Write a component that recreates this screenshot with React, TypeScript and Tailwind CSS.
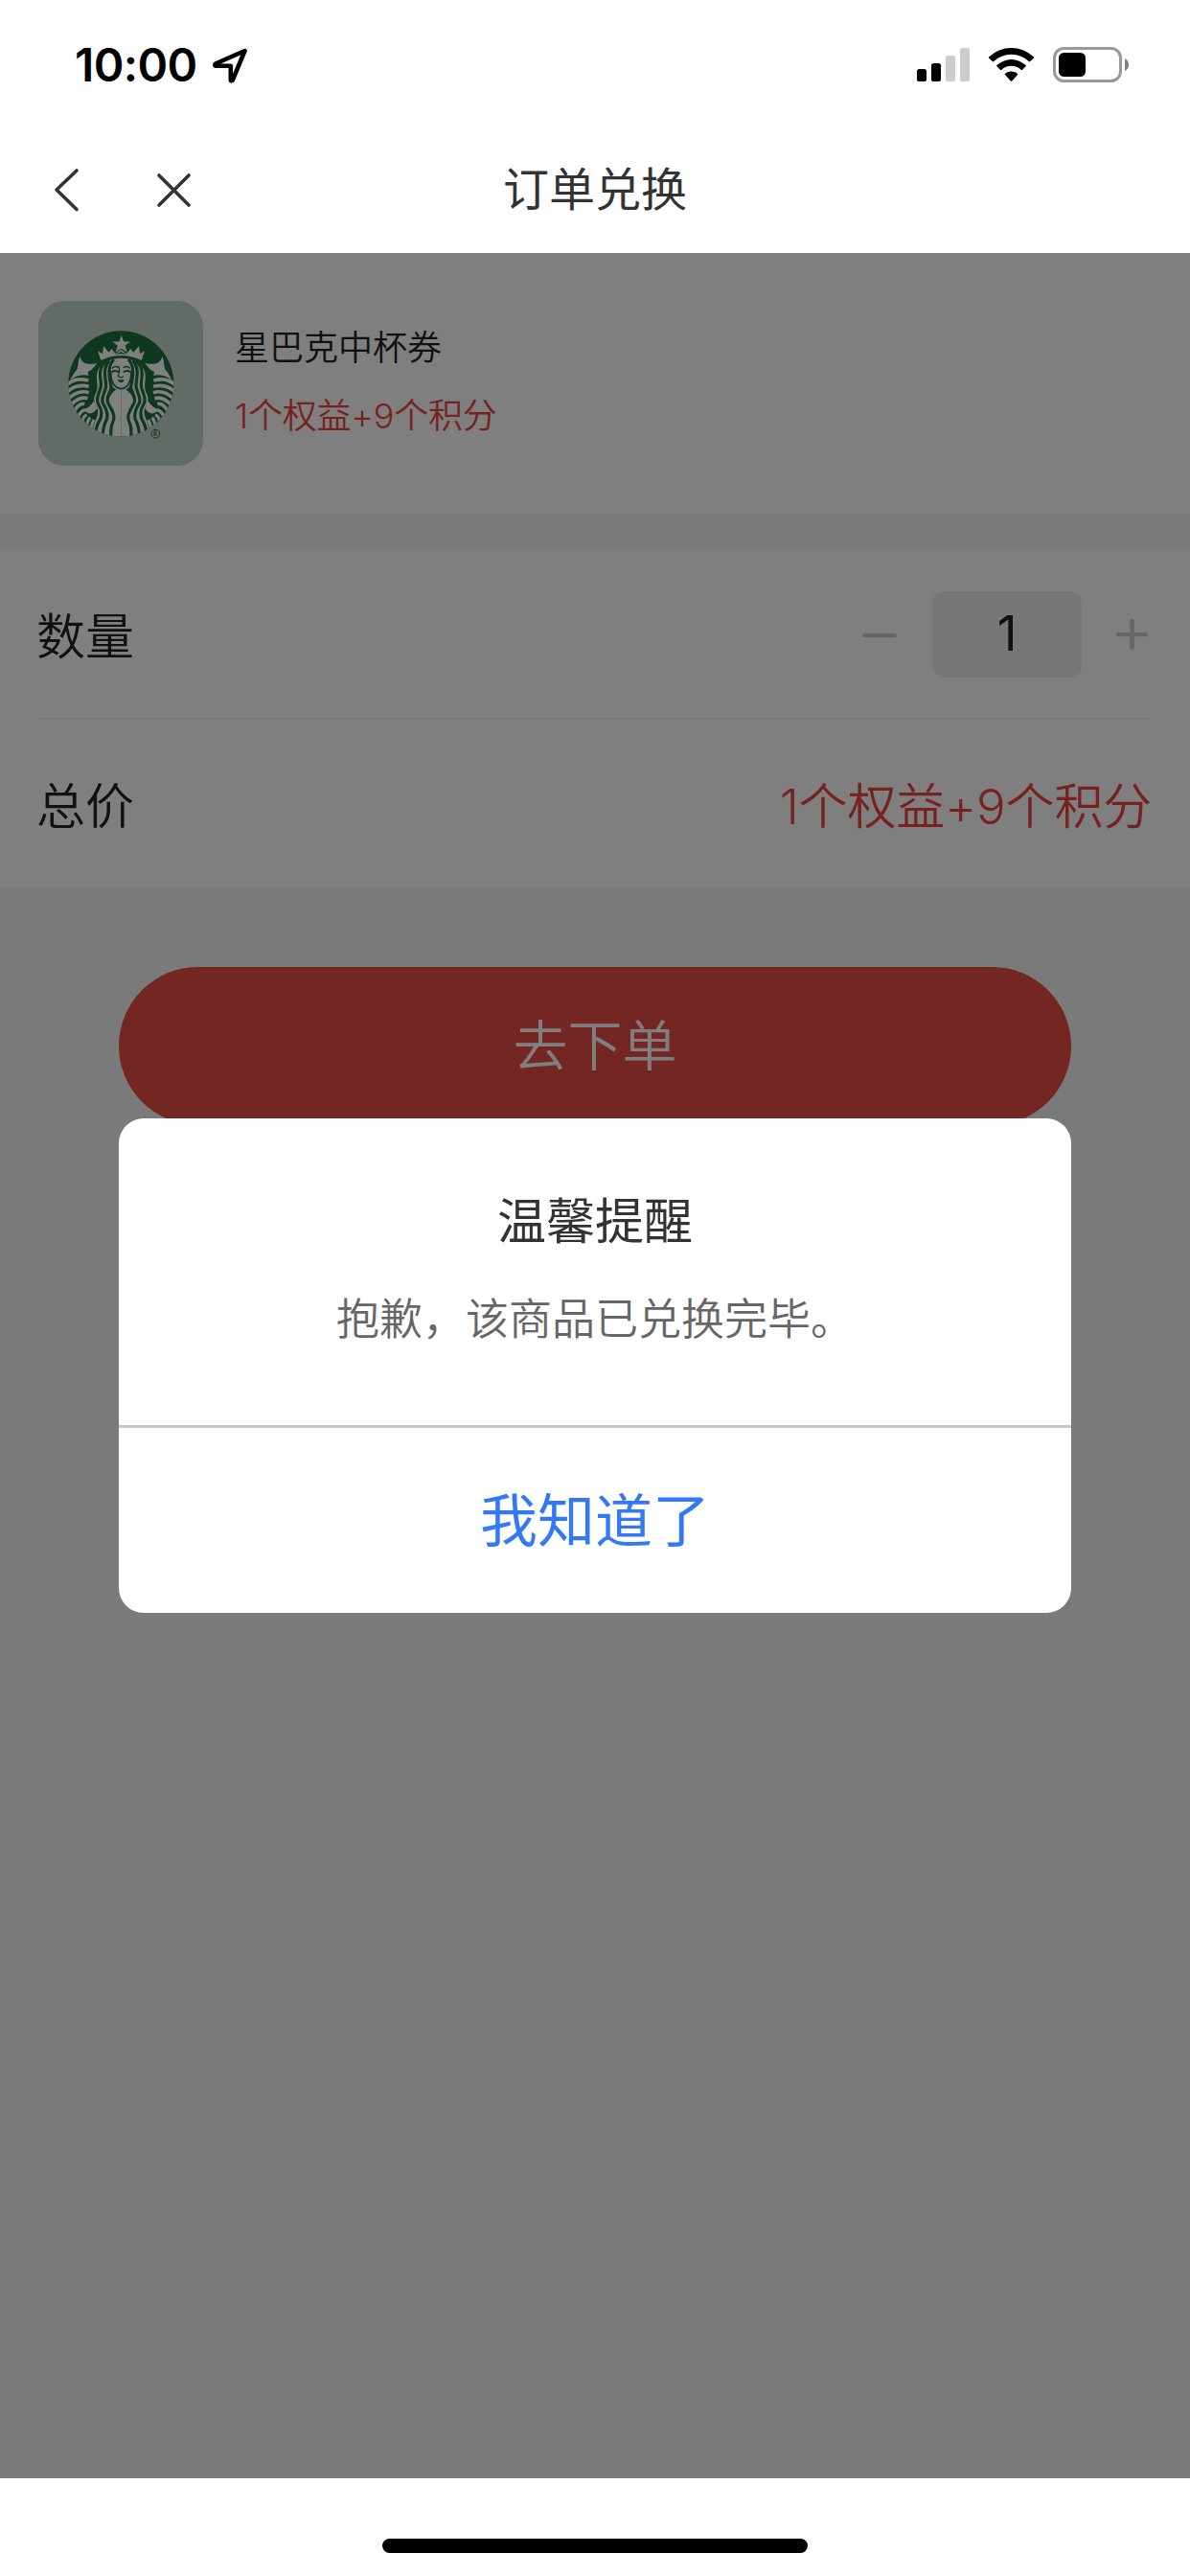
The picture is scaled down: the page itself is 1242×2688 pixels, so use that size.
import { useState } from 'react'
import type { ReactNode } from 'react'

const PRICE = '1个权益+9个积分'

function StatusBar() {
  return (
    <div className="flex h-[132px] items-start justify-between pr-[63px] pl-[78px] text-black">
      <div className="flex pt-[39px]">
        <span className="w-[144px] text-[48px] leading-[58px] font-semibold tracking-[-0.6px]">10:00</span>
        <svg className="mt-[10px] h-[39px] w-[38px]" viewBox="0 0 38 39" fill="none" stroke="currentColor" strokeWidth="4.6" strokeLinejoin="round">
          <path d="M33.5 4 L2.9 17.5 C2 18 2.2 19.8 3.2 19.8 H18.8 V34.2 C18.8 35.4 20.2 35.6 20.8 34.6 L33.5 4 Z" />
        </svg>
      </div>
      <div className="flex items-center pt-[48px]">
        <svg className="h-[38px] w-[56px]" viewBox="0 0 56 38">
          <rect x="0" y="24" width="10" height="13" rx="2.6" />
          <rect x="15" y="18" width="10" height="19" rx="2.6" />
          <rect x="30" y="10" width="10" height="27" rx="2.6" fill="#ccc" />
          <rect x="45" y="2" width="10" height="35" rx="2.6" fill="#ccc" />
        </svg>
        <svg className="ml-[18px] h-[38px] w-[50px]" viewBox="0 0 50 38">
          <path d="M1 11.5 A34 34 0 0 1 48 11.5 Q48.3 12.2 47.8 12.7 L44 16.2 Q43.5 16.6 43 16.2 A27 27 0 0 0 6 16.2 Q5.5 16.6 5 16.2 L1.2 12.7 Q.7 12.2 1 11.5 Z" />
          <path d="M9.4 20.1 A22 22 0 0 1 39.6 20.1 Q40.1 20.7 39.6 21.3 L36 24.9 Q35.4 25.3 34.9 24.9 A15.2 15.2 0 0 0 14.1 24.9 Q13.5 25.3 13 24.9 L9.4 21.3 Q8.9 20.7 9.4 20.1 Z" />
          <path d="M18 28.8 A10 10 0 0 1 31 28.8 Q31.5 29.4 31 30 L25.2 36.4 Q24.5 37 23.8 36.4 L18 30 Q17.5 29.4 18 28.8 Z" />
        </svg>
        <svg className="ml-[18px] h-[38px] w-[80px]" viewBox="0 0 80 38">
          <rect x="1.5" y="2.5" width="69" height="34" rx="10" fill="none" stroke="#999" strokeWidth="3" />
          <rect x="6" y="7" width="28" height="25" rx="5.5" />
          <path d="M75 13 Q79 15 79 19.5 Q79 24 75 26 Z" fill="#808080" />
        </svg>
      </div>
    </div>
  )
}

function NavBar() {
  return (
    <div className="relative flex h-[132px] items-center justify-center text-[#333]">
      <svg className="absolute top-[42px] left-[55px] h-[48px] w-[148px]" viewBox="0 0 148 48" fill="none" stroke="currentColor" strokeWidth="3.6" strokeLinecap="round">
        <path d="M25 4 L4 24 L25 44.5" strokeLinejoin="round" />
        <path d="M111 9 L142 40 M142 9 L111 40" />
      </svg>
      <h1 className="text-[48px] leading-[66px]">订单兑换</h1>
    </div>
  )
}

// one half of the siren: fin, scales, hair. The other half is its mirror
function SirenHalf() {
  return (
    <>
      <g fill="#fff">
        <path d="M160 216 Q166 234 178 238 Q198 242 214 236 Q201 257 186 263 Q184 270 188 275 Q152 268 130 292 Q139 268 151 257 Q155 243 156 228 Z" />
        <path d="M173 381 Q193 376 204 355 L214 378 Q204 396 188 394 Q176 390 173 381 Z" />
      </g>
      <g fill="none" stroke="#fff" strokeWidth="11">
        <path d="M117 307 Q145 279 187 291" />
        <path d="M119 328 Q149 300 188 310" />
        <path d="M121 352 Q153 318 188 329" />
        <path d="M130 370 Q157 339 184 347" />
        <path d="M141 389 Q157 361 175 364" />
        <path d="M155 403 Q164 386 176 383" strokeWidth="10" />
        <path d="M168 419 Q171 402 182 399" strokeWidth="10" />
        <path d="M181 432 Q184 416 192 407" strokeWidth="10" />
        <path d="M194 445 Q197 428 204 414" strokeWidth="10" />
      </g>
      <path d="M289 221 C254 221 226 238 216 260 C207 289 221 302 211 328 C201 345 203 359 213 375 C224 397 205 417 202 440 L215 480 H289 Z" fill="#fff" />
      <g fill="none" stroke="#1e7040" strokeWidth="9.5">
        <path d="M242 232 C214 252 226 285 226 303 C228 325 207 339 217 363 C230 383 232 403 218 423 Q210 438 210 460" />
        <path d="M252 228 C229 255 242 286 242 307 C242 329 224 340 232 362 C246 385 252 404 240 422 Q232 440 231 475" />
        <path d="M266 225 C244 250 253 286 258 309 C260 327 240 340 248 361 C258 381 274 400 263 422 Q254 440 259 479" />
      </g>
      <path d="M258 306 Q270 320 275 318 Q255 334 249 351 L244 340 Z" fill="#1e7040" />
    </>
  )
}

function CouponLogo() {
  return (
    <svg className="h-[172px] w-[172px] rounded-[27px] bg-[#c4d6cc]" viewBox="30 42 516 516">
      <defs>
        <clipPath id="seal">
          <circle cx="289" cy="301" r="165" />
        </clipPath>
      </defs>
      <g clipPath="url(#seal)">
        <rect x="120" y="130" width="340" height="340" fill="#1e7040" />
        <SirenHalf />
        <g transform="matrix(-1 0 0 1 578 0)">
          <SirenHalf />
        </g>
        <path d="M289 227 C266 227 257 242 257 265 C257 297 268 315 289 317 C310 315 321 297 321 265 C321 242 312 227 289 227 Z" fill="#fff" />
        <g fill="none" stroke="#1e7040" strokeLinecap="round">
          <path d="M257 262 C257 297 268 315 289 317 C310 315 321 297 321 262" strokeWidth="5" />
          <path d="M262 252 Q270 244 283 250 Q286 264 280 277 M316 252 Q308 244 297 250" strokeWidth="4" />
          <path d="M263 263 Q272 258 280 264 M298 264 Q307 258 316 263" strokeWidth="6" />
          <path d="M282 279 Q289 284 296 279" strokeWidth="3.5" />
          <path d="M280 291 Q289 288 298 291 Q289 302 280 291 Z" fill="#1e7040" strokeWidth="2.5" />
        </g>
        <path d="M216 199 L231 207 L234 183 L251 203 L259 192 L272 207 L289 194 L306 207 L319 192 L328 203 L345 183 L348 207 L363 199 L353 228 Q289 198 226 228 Z" fill="#fff" />
        <path d="M271 209 L289 201 L307 209 Q289 206 271 209 Z" fill="#1e7040" />
        <path d="M290 146 L298 168 L320 169 L303 182 L309 204 L290 192 L271 204 L277 182 L260 169 L283 168 Z" fill="#fff" stroke="#1e7040" strokeWidth="2" />
      </g>
      <circle cx="397" cy="458" r="13" fill="none" stroke="#1e7040" strokeWidth="3" />
      <path d="M393 465 V451 H398 Q402 455 397 459 H393 M397 459 L402 465" fill="none" stroke="#1e7040" strokeWidth="2.5" />
    </svg>
  )
}

function Row({ label, children }: { label: string; children: ReactNode }) {
  return (
    <div className="flex h-[175px] items-center justify-between">
      <span className="-ml-[2px] pt-[7px]">{label}</span>
      {children}
    </div>
  )
}

export default function App() {
  const [count] = useState(1)

  return (
    <div className="flex h-[2688px] w-[1242px] flex-col overflow-hidden bg-white font-['Inter','Noto_Sans_CJK_SC',sans-serif]">
      <StatusBar />
      <NavBar />

      <main className="relative flex flex-1 flex-col bg-[#f4f4f4] text-[#222]">
        <div className="flex h-[272px] items-center bg-white pl-10">
          <CouponLogo />
          <div className="-mt-[2px] ml-[33px] text-[36px] leading-[71px] font-[350]">
            <p>星巴克中杯券</p>
            <p className="tracking-[-0.2px] text-[#f04440]">{PRICE}</p>
          </div>
        </div>

        <div className="mt-[38px] h-[352px] bg-white px-10 text-[51px] font-[350]">
          <Row label="数量">
            <div className="mr-[2px] flex items-center text-[#ccc]">
              <svg className="h-[36px] w-[36px]" viewBox="0 0 36 36" stroke="currentColor" strokeWidth="4.5" strokeLinecap="round">
                <path d="M2.5 19 H33.5" />
              </svg>
              <div className="mr-[35px] ml-[37px] flex h-[90px] w-[156px] items-center justify-center rounded-[12px] bg-[#eee] font-normal text-[#222]">{count}</div>
              <svg className="h-[36px] w-[36px]" viewBox="0 0 36 36" stroke="currentColor" strokeWidth="4.5" strokeLinecap="round">
                <path d="M3 18 H31.5 M17.5 4 V32" />
              </svg>
            </div>
          </Row>
          <div className="mr-[3px] h-[2px] bg-[#f0f0f0]" />
          <Row label="总价">
            <span className="pt-[7px] tracking-[-0.2px] text-[#f04440]">{PRICE}</span>
          </Row>
        </div>

        <button className="mx-[124px] mt-[83px] h-[165px] rounded-full bg-[#e84c44] text-[57px] font-[350] text-white">去下单</button>

        {/* 遮罩 + 弹窗 */}
        <div className="absolute inset-0 flex items-start justify-center bg-black/50 pt-[903px]">
          <div className="w-[994px] overflow-hidden rounded-[26px] bg-white text-center">
            <div className="h-[320px] pt-[72px]">
              <h2 className="text-[51px] leading-[72px] text-[#333]">温馨提醒</h2>
              <p className="mt-[33px] text-[45px] leading-[66px] font-[350] text-[#666]">抱歉，该商品已兑换完毕。</p>
            </div>
            <button className="h-[196px] w-full border-t-[3px] border-[#c8c8c8] text-[60px] text-[#3478f6]">我知道了</button>
          </div>
        </div>
      </main>

      <footer className="flex h-[102px] justify-center pt-[63px]">
        <div className="h-[15px] w-[444px] rounded-full bg-black" />
      </footer>
    </div>
  )
}
